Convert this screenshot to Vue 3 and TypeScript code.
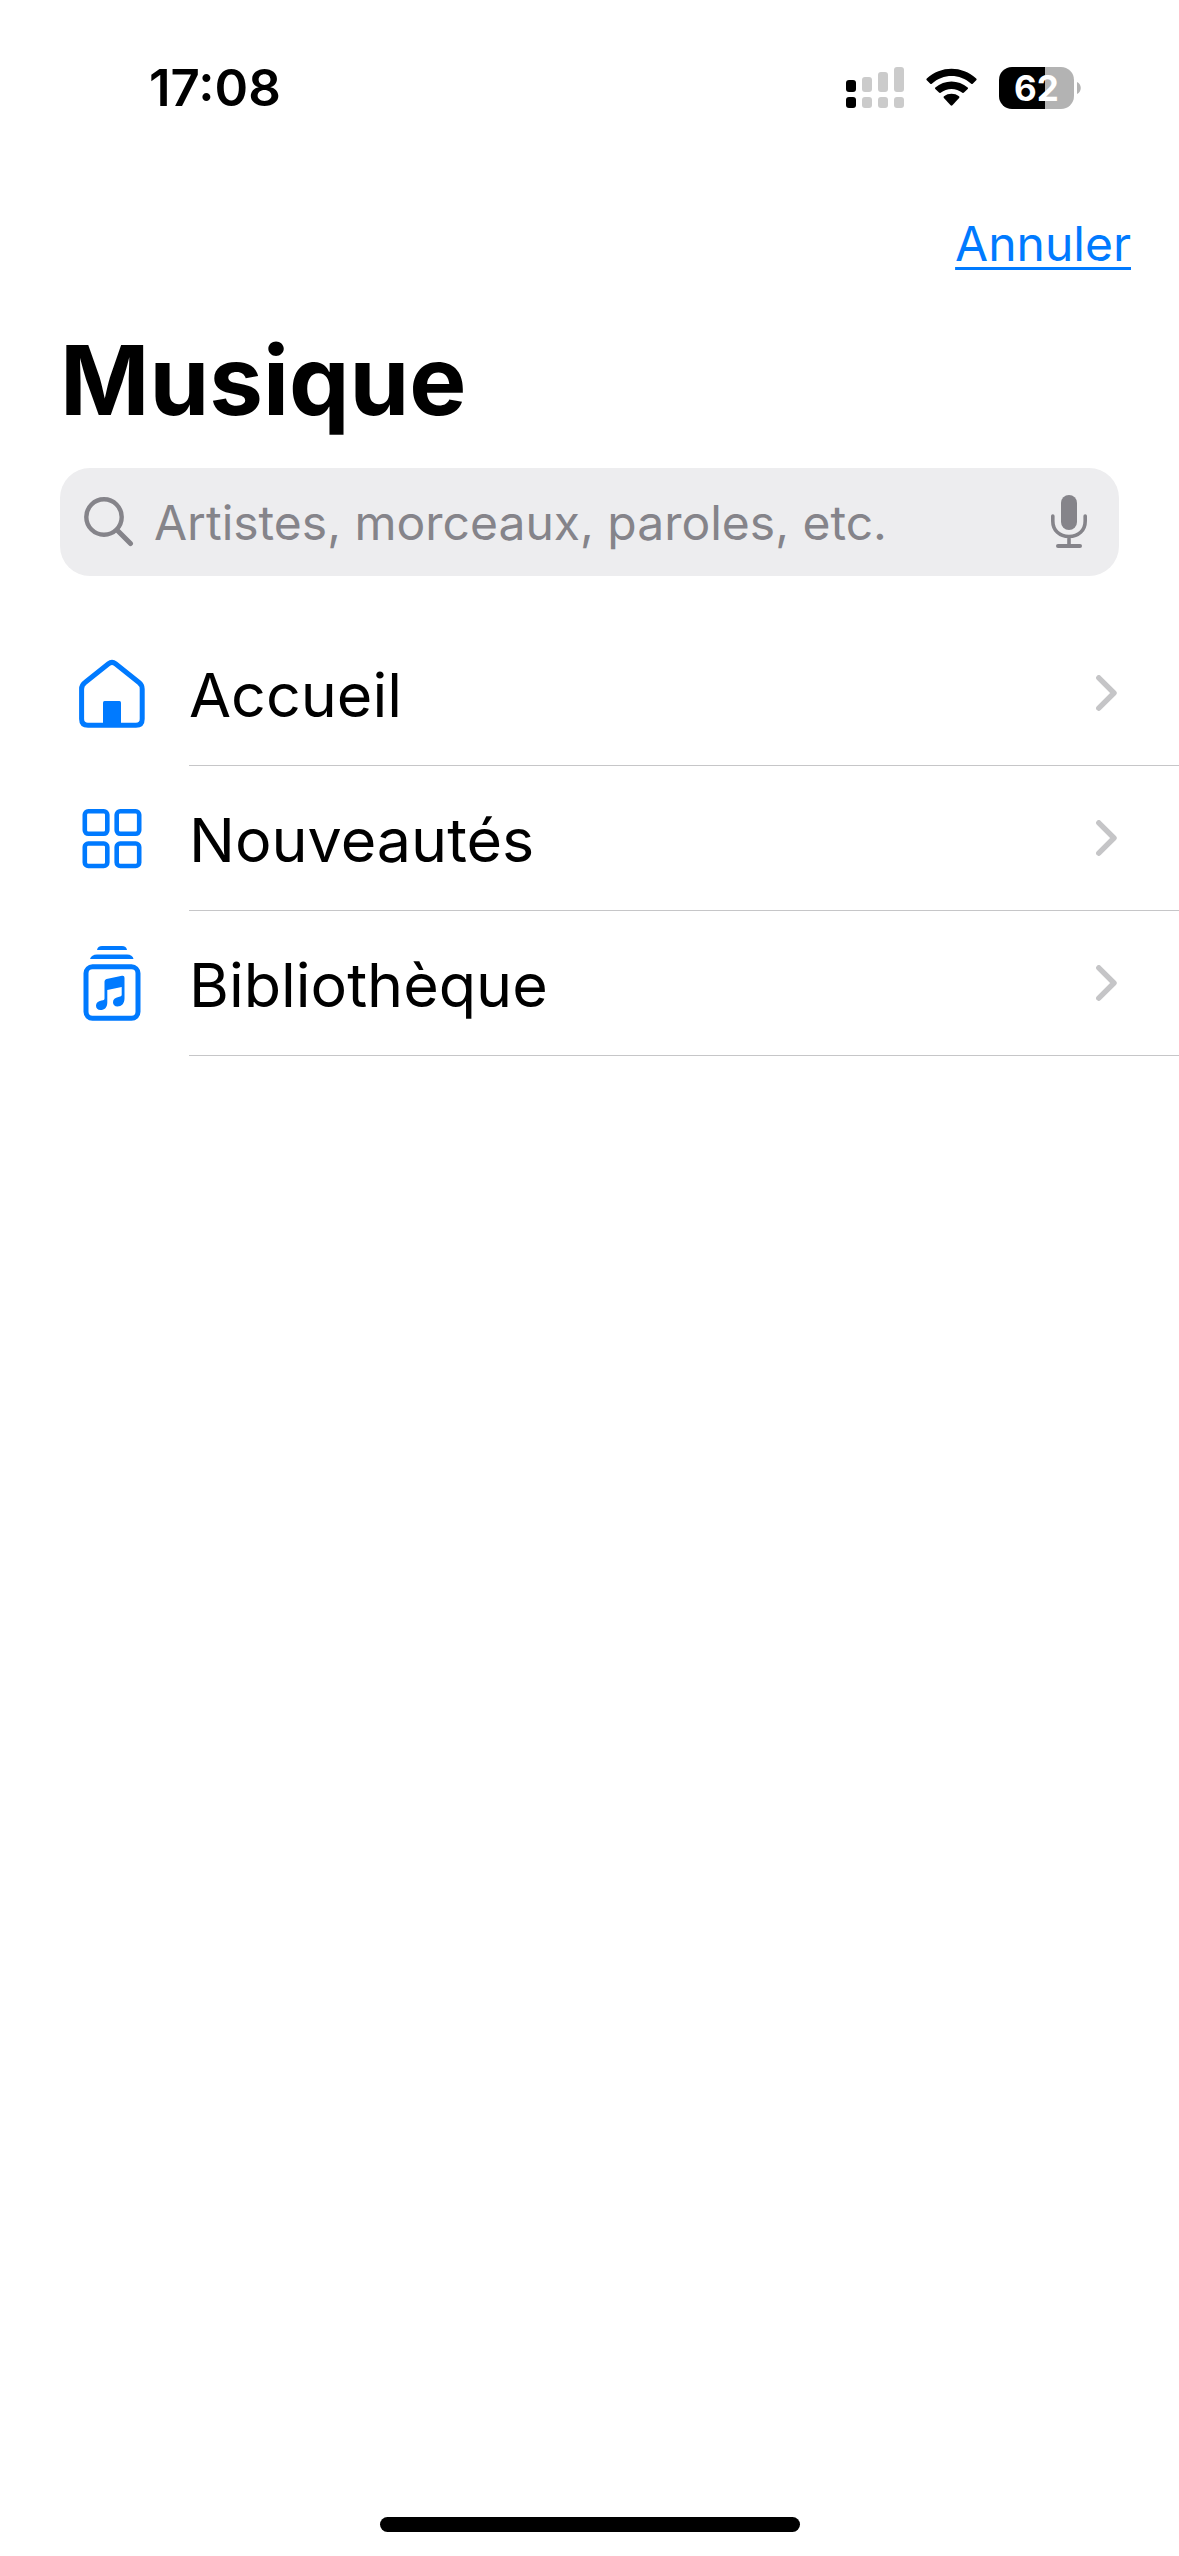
<script setup lang="ts">
import { ref } from 'vue'

type IconName = 'home' | 'grid' | 'library'

interface Section {
  icon: IconName
  label: string
  href: string
}

const query = ref<string>('')

const sections: Section[] = [
  { icon: 'home', label: 'Accueil', href: '#accueil' },
  { icon: 'grid', label: 'Nouveautés', href: '#nouveautes' },
  { icon: 'library', label: 'Bibliothèque', href: '#bibliotheque' },
]
</script>

<template>
  <div class="screen">
    <div class="status">
      <time class="clock">17:08</time>
      <div class="indicators">
        <svg class="signal" width="58" height="42" viewBox="0 0 58 42" aria-hidden="true">
          <g fill="#000">
            <rect x="0" y="13" width="10" height="12" rx="3" />
            <rect x="0" y="30" width="10" height="11" rx="3" />
          </g>
          <g fill="#cbcbcb">
            <rect x="16" y="10" width="10" height="15" rx="3" />
            <rect x="32" y="5" width="10" height="20" rx="3" />
            <rect x="48" y="0" width="10" height="25" rx="3" />
            <rect x="16" y="30" width="10" height="11" rx="3" />
            <rect x="32" y="30" width="10" height="11" rx="3" />
            <rect x="48" y="30" width="10" height="11" rx="3" />
          </g>
        </svg>
        <svg class="wifi" width="51" height="42" viewBox="0 0 51 42" aria-hidden="true">
          <path d="M.8 11.6C14.8-1.600 36.2-1.600 50.2 11.600Q51 12.400 50.200 13.200L46.700 16.700Q46 17.400 45.200 16.700C33.500 6.400 17.500 6.400 5.800 16.700Q5 17.400 4.300 16.700L.8 13.200Q0 12.400.8 11.600Z" />
          <path d="M9.300 20.400C18.500 12.400 32.500 12.400 41.700 20.400Q42.500 21.200 41.700 22L38 25.600Q37.200 26.400 36.400 25.700C30 20.600 21 20.600 14.600 25.700Q13.800 26.400 13 25.600L9.300 22Q8.500 21.200 9.300 20.400Z" />
          <path d="M18 29.200C22.300 25.900 28.700 25.900 33 29.200Q33.900 30 33.100 30.900L26.400 38.200Q25.500 39.100 24.600 38.200L17.900 30.900Q17.100 30 18 29.200Z" />
        </svg>
        <div class="battery">
          <span class="charge">62</span>
          <svg width="4" height="12" viewBox="0 0 4 12" aria-hidden="true"><path d="M0 0C5 2 5 10 0 12Z" fill="#b3b3b3" /></svg>
        </div>
      </div>
    </div>

    <nav class="toolbar">
      <a class="cancel" href="#annuler">Annuler</a>
    </nav>

    <main class="content">
      <h1 class="title">Musique</h1>

      <form class="search" role="search" @submit.prevent>
        <label class="lens" for="query" aria-label="Rechercher">
          <svg width="50" height="50" viewBox="0 0 50 50" fill="none" stroke="#85848a" stroke-linecap="round">
            <circle cx="20" cy="20" r="17.700" stroke-width="4.400" />
            <path d="M33.500 33.500L46.500 46.500" stroke-width="5" />
          </svg>
        </label>
        <input id="query" v-model="query" class="field" type="text" placeholder="Artistes, morceaux, paroles, etc." />
        <button class="mic" type="button" aria-label="Dicter">
          <svg width="36" height="54" viewBox="0 0 36 54" fill="none" stroke="#85848a" stroke-linecap="round">
            <rect x="10" y="0" width="16" height="35" rx="8" fill="#85848a" stroke="none" />
            <path d="M1.800 21V26C1.800 35.500 8.500 41.500 18 41.500S34.200 35.500 34.200 26V21M18 42V50" stroke-width="3.600" />
            <path d="M7 51H29" stroke-width="4" />
          </svg>
        </button>
      </form>

      <ul class="list">
        <li v-for="section in sections" :key="section.icon">
          <a class="row" :href="section.href">
            <span class="icon">
              <svg v-if="section.icon === 'home'" width="68" height="76" viewBox="0 0 68 76" aria-hidden="true">
                <path d="M30.500 7.700Q34 4.900 37.500 7.700L61 26.500Q64.200 29 64.200 33V63Q64.200 69.300 58 69.300H10Q3.600 69.300 3.600 63V33Q3.600 29 7 26.500Z" fill="none" stroke="#007aff" stroke-width="5" />
                <path d="M25 70V46.500Q25 45 26.500 45H41.500Q43 45 43 46.500V70Z" fill="#007aff" />
              </svg>
              <svg v-else-if="section.icon === 'grid'" width="60" height="76" viewBox="0 0 60 76" fill="none" stroke="#007aff" stroke-width="4.600" aria-hidden="true">
                <rect x="2.800" y="10.300" width="22.500" height="22.500" rx="3.500" />
                <rect x="34.700" y="10.300" width="22.500" height="22.500" rx="3.500" />
                <rect x="2.800" y="42.500" width="22.500" height="22.500" rx="3.500" />
                <rect x="34.700" y="42.500" width="22.500" height="22.500" rx="3.500" />
              </svg>
              <svg v-else width="58" height="76" viewBox="0 0 58 76" fill="#007aff" aria-hidden="true">
                <path d="M14 4Q14.600 0 19 0H39Q43.400 0 44 4Z" />
                <path d="M7 13Q8.500 8.500 14 8.500H44Q49.500 8.500 50.500 13Z" />
                <rect x="3" y="20.800" width="52" height="51.500" rx="6.500" fill="none" stroke="#007aff" stroke-width="5" />
                <path d="M21.500 35.500Q21.500 33.500 23.500 33L39 29.800Q41.500 29.400 41.500 31.800V52.500C41.500 57.500 38.500 60.500 34.500 60.500C31.700 60.500 30 58.800 30 56.300C30 53.300 32.200 51.600 35.500 51L37.200 50.600Q38.700 50.200 38.700 48.700V41L24.300 44V56.500C24.300 61.500 21.500 64 17.500 64C14.700 64 13 62.300 13 59.800C13 56.800 15.200 55.200 18.400 54.600L20 54.300Q21.500 54 21.500 52.500Z" />
              </svg>
            </span>
            <span class="row-body">
              <span class="label">{{ section.label }}</span>
              <svg width="22" height="36" viewBox="0 0 22 36" aria-hidden="true">
                <path d="M2.800 2.800L18 18L2.800 33.200" fill="none" stroke="#c5c5c7" stroke-width="5.400" stroke-linecap="round" stroke-linejoin="round" />
              </svg>
            </span>
          </a>
        </li>
      </ul>
    </main>

    <div class="home-indicator"></div>
  </div>
</template>

<style>
body {
  margin: 0;
  background: #fff;
}
</style>

<style scoped>
.screen {
  box-sizing: border-box;
  min-height: 100vh;
  display: flex;
  flex-direction: column;
  background: #fff;
  color: #000;
  font-family: Inter, "Liberation Sans", sans-serif;
}

.status {
  display: flex;
  align-items: center;
  justify-content: space-between;
  height: 176px;
  padding: 0 98px 0 149px;
}

.clock {
  font-size: 51px;
  font-weight: 600;
  line-height: 60px;
}

.indicators {
  display: flex;
  align-items: center;
  gap: 22px;
}

.signal,
.wifi {
  display: block;
}

.battery {
  display: flex;
  align-items: center;
  gap: 3px;
}

.charge {
  width: 75px;
  height: 42px;
  border-radius: 13px;
  background: linear-gradient(to right, #000 62%, #b3b3b3 62%);
  color: #fff;
  font-size: 35px;
  font-weight: 700;
  line-height: 42px;
  text-align: center;
}

.toolbar {
  display: flex;
  align-items: center;
  justify-content: flex-end;
  height: 136px;
  padding: 0 48px;
}

.cancel {
  color: #007aff;
  font-size: 48px;
  line-height: 60px;
  text-decoration-thickness: 3px;
  text-underline-offset: 6px;
  text-decoration-skip-ink: none;
}

.content {
  flex: 1;
}

.title {
  margin: 8px 60px 28px;
  font-size: 96px;
  font-weight: 700;
  line-height: 120px;
}

.search {
  display: flex;
  align-items: center;
  gap: 20px;
  height: 108px;
  margin: 0 60px;
  padding: 0 32px 0 24px;
  box-sizing: border-box;
  border-radius: 30px;
  background: #ededef;
}

.lens,
.mic {
  display: flex;
  flex: none;
}

.mic {
  padding: 0;
  border: 0;
  background: none;
}

.field {
  flex: 1;
  min-width: 0;
  padding: 2px 0 0;
  border: 0;
  outline: 0;
  background: none;
  color: #000;
  font-family: inherit;
  font-size: 48px;
  line-height: 60px;
}

.field::placeholder {
  color: #85848a;
  opacity: 1;
}

.list {
  margin: 45px 0 0;
  padding: 0;
  list-style: none;
}

.row {
  display: flex;
  height: 145px;
  color: inherit;
  text-decoration: none;
}

.icon {
  display: flex;
  align-items: center;
  justify-content: center;
  flex: none;
  box-sizing: border-box;
  width: 189px;
  padding-left: 35px;
}

.row-body {
  flex: 1;
  display: flex;
  align-items: center;
  justify-content: space-between;
  box-sizing: border-box;
  padding-right: 61px;
  border-bottom: 1px solid #c6c6c8;
}

.label {
  padding-top: 4px;
  font-size: 61px;
  line-height: 80px;
}

.home-indicator {
  align-self: center;
  width: 420px;
  height: 15px;
  margin-bottom: 24px;
  border-radius: 8px;
  background: #000;
}
</style>
